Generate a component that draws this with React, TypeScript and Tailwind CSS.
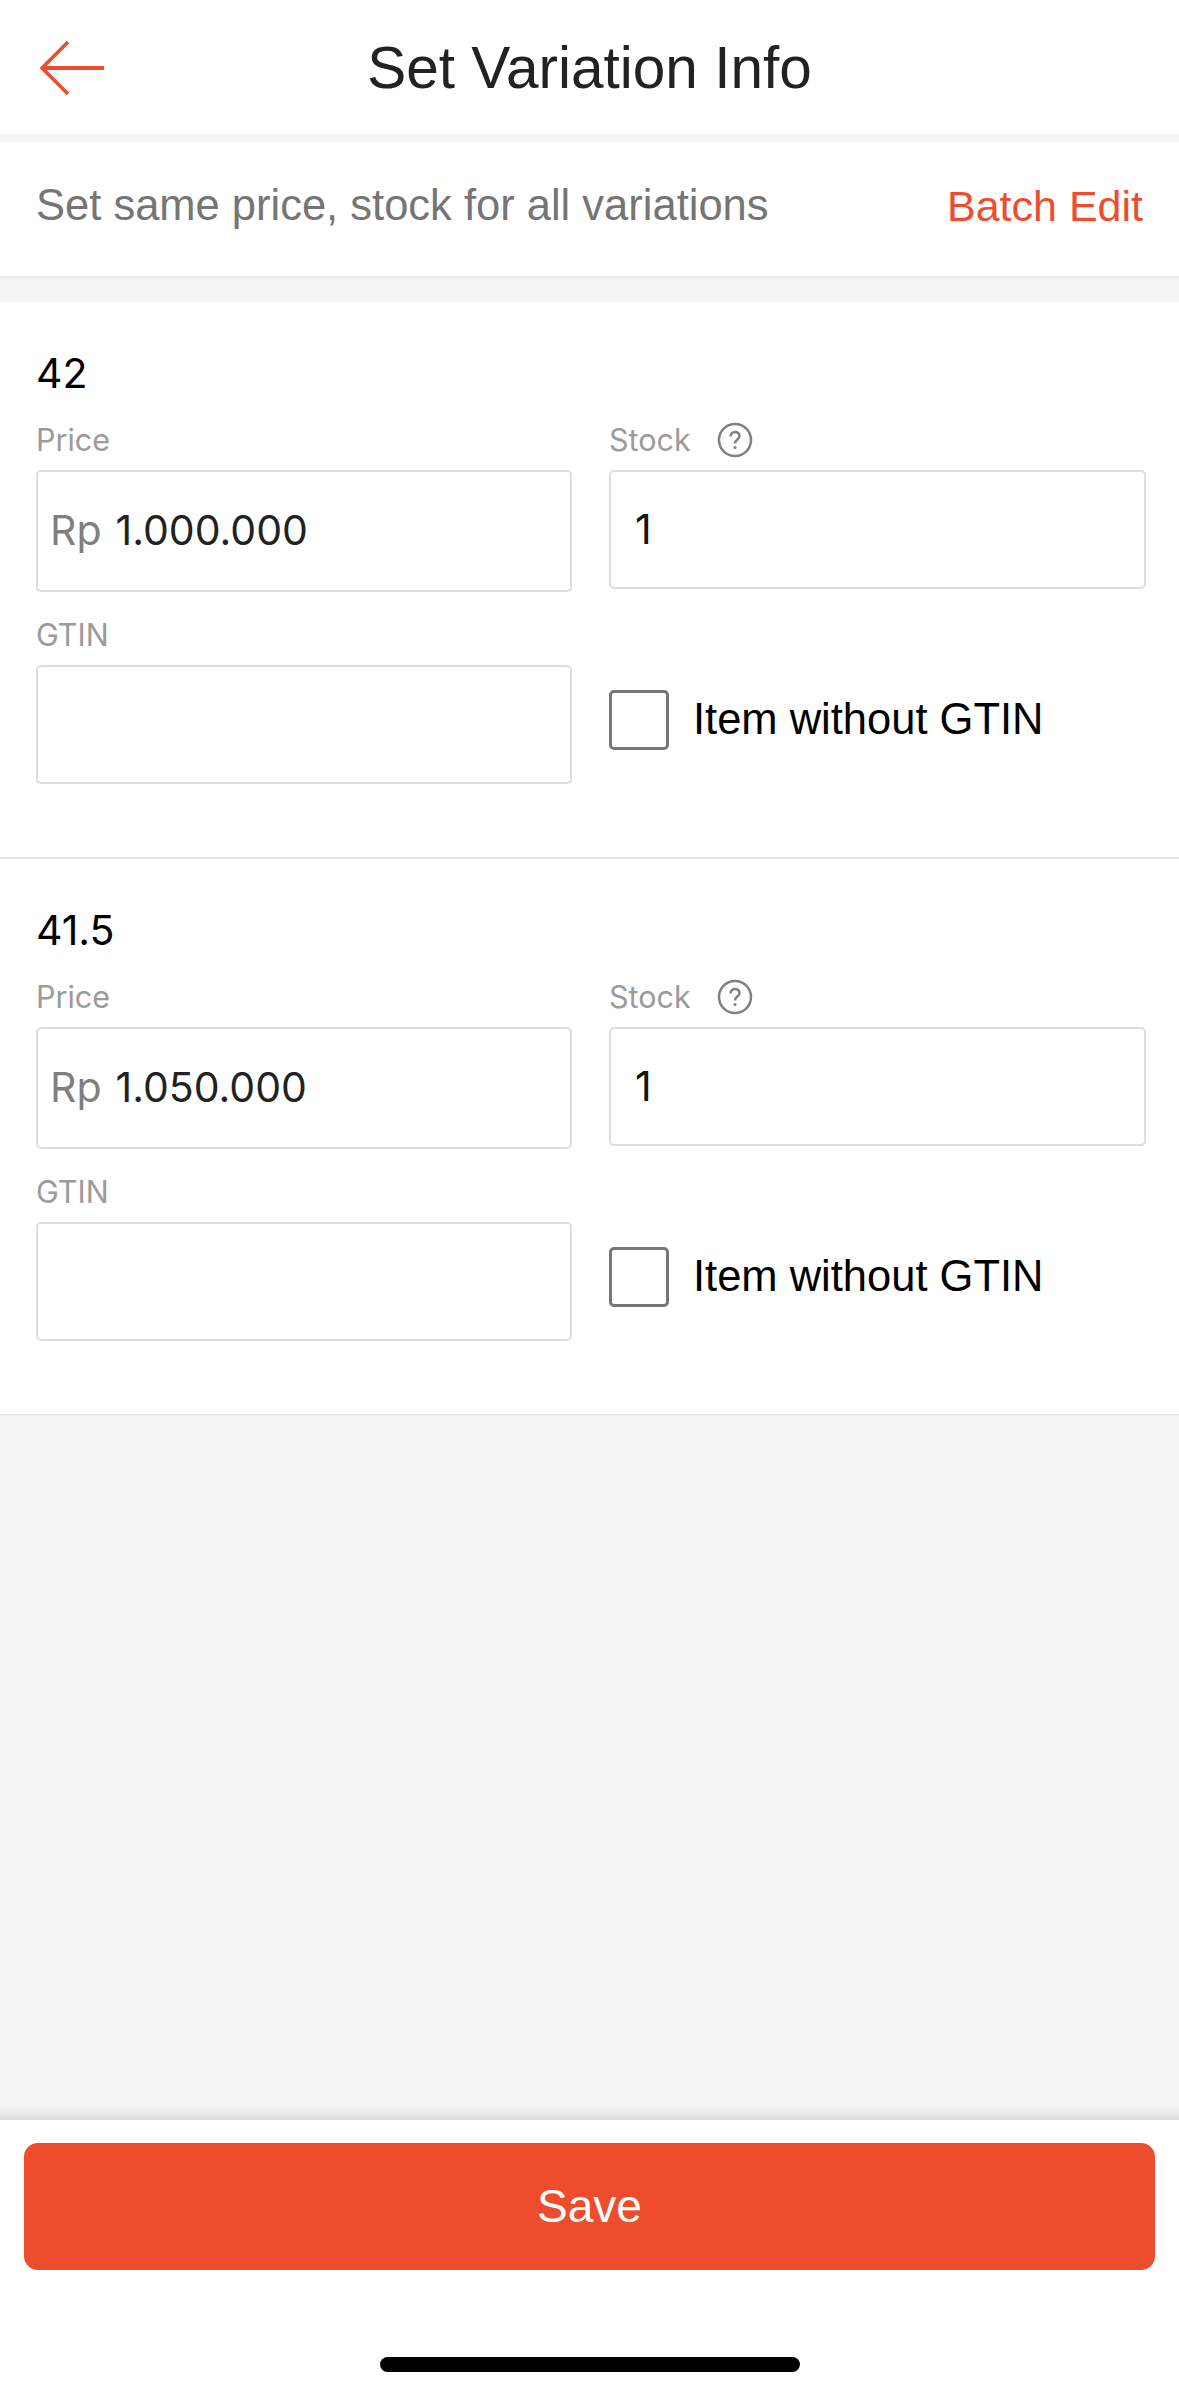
const ORANGE = "text-[#ee4d2d]";

function BackArrow() {
  return (
    <svg width="66" height="56" viewBox="0 0 66 56" fill="none" className="shrink-0 mt-[2px]">
      <path d="M64 28H3" stroke="#ee4d2d" strokeWidth="4" />
      <path d="M28 2 2 28l26 26" stroke="#ee4d2d" strokeWidth="3.5" />
    </svg>
  );
}

function HelpIcon() {
  return (
    <svg width="36" height="36" viewBox="0 0 36 36" fill="none">
      <circle cx="18" cy="18" r="16" stroke="#808080" strokeWidth="2.5" />
      <path d="M13.5 14.5c0-6 9-6 9 -.5 0 3.5-4.5 3.5-4.5 7.5" stroke="#808080" strokeWidth="2.5" />
      <circle cx="18" cy="25.5" r="1.6" fill="#808080" />
    </svg>
  );
}

function Label({ children }: { children: React.ReactNode }) {
  return <p className="h-[30px] text-[30.5px] leading-[30px] text-[#9b9b9b] font-['Inter',sans-serif]">{children}</p>;
}

function VariationCard({ name, price }: { name: string; price: string }) {
  return (
    <section className="h-[557px] bg-white border-b-2 border-[#e8e8e8] px-[36px] font-['Inter',sans-serif]">
      <h2 className="pt-[46px] text-[41px] leading-[50px] text-black">{name}</h2>
      <div className="mt-[27px] grid grid-cols-[536px_537px] gap-x-[37px]">
        <div>
          <Label>Price</Label>
          <div className="mt-[15px] h-[122px] flex items-center pl-[12px] border-2 border-[#dedede] rounded-[5px] text-[41px]">
            <span className="text-[#7f7f7f] mr-[14px]">Rp</span>
            <span className="text-[#222222]">{price}</span>
          </div>
        </div>
        <div>
          <div className="h-[30px] flex items-center gap-[26px]">
            <Label>Stock</Label>
            <HelpIcon />
          </div>
          <div className="mt-[15px] h-[119px] flex items-center pl-[24px] border-2 border-[#dedede] rounded-[5px] text-[41px] text-[#111111]">
            1
          </div>
        </div>
      </div>
      <div className="mt-[28px] grid grid-cols-[536px_537px] gap-x-[37px]">
        <div>
          <Label>GTIN</Label>
          <div className="mt-[15px] h-[119px] border-2 border-[#dedede] rounded-[5px]" />
        </div>
        <div className="flex items-center gap-[24px] pt-[58px] pb-[23px]">
          <div className="w-[60px] h-[60px] border-[3px] border-[#777777] rounded-[5px]" />
          <span className="text-[43.5px] text-black font-['Liberation_Sans',sans-serif]">Item without GTIN</span>
        </div>
      </div>
    </section>
  );
}

export default function App() {
  return (
    <div className="w-[1179px] h-[2396px] flex flex-col bg-[#f5f5f5] font-['Liberation_Sans',sans-serif] overflow-hidden">
      <header className="h-[134px] bg-white flex items-center pl-[40px] relative">
        <BackArrow />
        <h1 className="absolute inset-x-0 mt-[2px] text-center text-[58.5px] text-[#222222]">Set Variation Info</h1>
      </header>
      <div className="mt-[8px] h-[136px] bg-white border-b-2 border-[#e8e8e8] flex items-center justify-between px-[36px] pb-[6px] text-[43.5px]">
        <span className="text-[#757575]">Set same price, stock for all variations</span>
        <span className={`${ORANGE} text-[43px]`}>Batch Edit</span>
      </div>
      <div className="h-[24px]" />
      <VariationCard name="42" price="1.000.000" />
      <VariationCard name="41.5" price="1.050.000" />
      <div className="flex-1 bg-gradient-to-b from-[#f5f5f5] from-[98%] to-[#dcdcdc]" />
      <footer className="h-[276px] bg-white flex flex-col items-center">
        <button className="mt-[23px] w-[1131px] h-[127px] rounded-[14px] bg-[#ee4d2d] text-white text-[46px]">Save</button>
        <div className="mt-[87px] w-[420px] h-[15px] rounded-full bg-black" />
      </footer>
    </div>
  );
}
